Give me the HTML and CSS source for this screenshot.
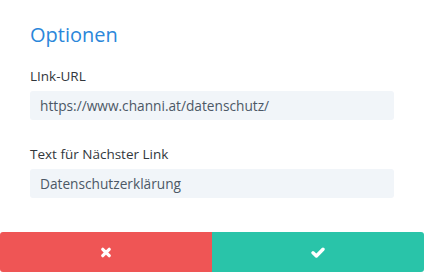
FILE: index.html
```html
<!DOCTYPE html>
<html lang="de">
<head>
  <meta charset="UTF-8">
  <title>Optionen</title>
  <link rel="stylesheet" href="styles.css">
</head>
<body>
  <div class="panel">
    <h1 class="title">Optionen</h1>

    <div class="option">
      <label class="label">LInk-URL</label>
      <div class="field">https://www.channi.at/datenschutz/</div>
    </div>

    <div class="option">
      <label class="label">Text für Nächster Link</label>
      <div class="field">Datenschutzerklärung</div>
    </div>
  </div>

  <div class="actions">
    <button class="btn cancel" title="Abbrechen">
      <svg width="10" height="11" viewBox="0 0 10 11">
        <path d="M1.8 2.3 L8.2 8.7 M8.2 2.3 L1.8 8.7" stroke="#fff" stroke-width="3.2" stroke-linecap="round" fill="none"/>
      </svg>
    </button>
    <button class="btn save" title="Speichern">
      <svg width="14" height="11" viewBox="0 0 14 11">
        <path d="M2 5.8 L5.4 9 L12 2.2" stroke="#fff" stroke-width="3.4" stroke-linecap="round" stroke-linejoin="round" fill="none"/>
      </svg>
    </button>
  </div>
</body>
</html>
```

FILE: styles.css
```css
body {
  margin: 0;
  background: #fff;
  font-family: "Open Sans", "Noto Sans", sans-serif;
}
.panel {
  padding: 21px 30px 0;
}
.title {
  margin: 0;
  font-size: 20px;
  line-height: 28px;
  font-weight: 400;
  color: #2b87da;
}
.option {
  margin-top: 17px;
}
.option + .option {
  margin-top: 24px;
}
.label {
  display: block;
  font-size: 13.5px;
  line-height: 20px;
  font-weight: 500;
  color: #32373c;
  margin-bottom: 5px;
}
.field {
  height: 29px;
  padding: 1px 10px 0;
  box-sizing: border-box;
  background: #f1f5f9;
  border-radius: 3px;
  font-size: 13.7px;
  line-height: 28px;
  color: #4c5866;
}
.actions {
  display: flex;
  margin-top: 34px;
  height: 40px;
  border-radius: 3px;
  overflow: hidden;
}
.btn {
  flex: 1;
  border: none;
  margin: 0;
  padding: 0;
  display: flex;
  align-items: center;
  justify-content: center;
  cursor: pointer;
}
.cancel { background: #ef5555; }
.save { background: #29c4a9; }
```
